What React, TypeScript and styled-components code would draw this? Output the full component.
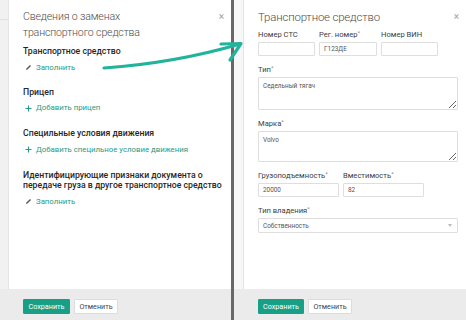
import React from "react";
import styled, { createGlobalStyle } from "styled-components";

const Global = createGlobalStyle`
  html, body { margin: 0; padding: 0; background: #fff; }
  body { font-family: Roboto, "Liberation Sans", Arial, sans-serif; }
  * { box-sizing: border-box; }
`;

const Page = styled.div`
  position: relative;
  display: flex;
  width: 466px;
  height: 320px;
  overflow: hidden;
  background: #fff;
`;

const Screen = styled.div<{ $w?: number }>`
  display: flex;
  flex-direction: column;
  ${(p) => (p.$w ? `width: ${p.$w}px;` : "flex: 1;")}
  height: 320px;
`;

const Body = styled.div`
  flex: 1;
  display: flex;
  min-height: 0;
`;

const Backdrop = styled.div<{ $w: number; $line?: boolean }>`
  width: ${(p) => p.$w}px;
  flex-shrink: 0;
  background: ${(p) => (p.$line ? "#f1f1f1" : "#f7f7f7")};
  border-right: 1px solid #e4e4e4;
  ${(p) =>
    p.$line
      ? `background-image: linear-gradient(#f1f1f1 19px, #e2e2e2 19px, #e2e2e2 20px, #f1f1f1 20px);`
      : ""}
`;

const Panel = styled.div<{ $pl: number }>`
  flex: 1;
  position: relative;
  background: #fff;
  padding: 9px 8px 0 ${(p) => p.$pl}px;
  display: flex;
  flex-direction: column;
`;

const Title = styled.h1<{ $size: number }>`
  margin: 0;
  font-weight: 300;
  font-size: ${(p) => p.$size}px;
  letter-spacing: -0.15px;
  line-height: 16px;
  color: #4d4d4d;
  padding-right: 30px;
`;

const Close = styled.span`
  position: absolute;
  top: 11px;
  right: 7px;
  font-size: 10px;
  color: #a0a0a0;
  line-height: 12px;
`;

const Section = styled.div<{ $mt: number }>`
  margin-top: ${(p) => p.$mt}px;
  display: flex;
  flex-direction: column;
  gap: 5px;
`;

const Heading = styled.div`
  font-size: 8.7px;
  font-weight: 500;
  line-height: 10.5px;
  color: #262626;
  white-space: nowrap;
`;

const Link = styled.div`
  display: flex;
  align-items: center;
  gap: 4px;
  font-size: 7.8px;
  line-height: 12px;
  color: #2a9a84;
  padding-left: 2px;
`;

const Footer = styled.div<{ $pl: number }>`
  height: 31px;
  background: #ebebeb;
  display: flex;
  gap: 4px;
  padding: 10px 0 0 ${(p) => p.$pl}px;
`;

const Button = styled.button<{ $primary?: boolean; $w: number }>`
  width: ${(p) => p.$w}px;
  height: 15px;
  padding: 0;
  font-family: inherit;
  font-size: 7.2px;
  border-radius: 1px;
  border: 1px solid ${(p) => (p.$primary ? "#17a086" : "#dcdcdc")};
  background: ${(p) => (p.$primary ? "#17a086" : "#fff")};
  color: ${(p) => (p.$primary ? "#fff" : "#444")};
`;

const Divider = styled.div`
  width: 3px;
  height: 320px;
  background: #686868;
  flex-shrink: 0;
`;

const Form = styled.div`
  display: flex;
  flex-direction: column;
  gap: 9px;
  margin-top: 5px;
`;

const Row = styled.div`
  display: flex;
  gap: 4px;
`;

const Field = styled.label<{ $w?: number }>`
  display: flex;
  flex-direction: column;
  ${(p) => (p.$w ? `width: ${p.$w}px;` : "width: 200px;")}
`;

const Label = styled.span`
  font-size: 7.6px;
  line-height: 10px;
  height: 10px;
  color: #3d3d3d;
  margin-bottom: 2px;
  white-space: nowrap;
  sup { font-size: 6px; color: #888; line-height: 0; vertical-align: 2px; }
`;

const inputStyles = `
  font-family: Roboto, "Liberation Sans", Arial, sans-serif;
  font-size: 6.4px;
  color: #555;
  border: 1px solid #dedede;
  border-radius: 1px;
  background: #fff;
  padding: 0 0 0 4px;
  outline: none;
  width: 100%;
  margin: 0;
`;

const Input = styled.input`
  ${inputStyles}
  height: 14px;
`;

const TextArea = styled.textarea<{ $h: number }>`
  ${inputStyles}
  height: ${(p) => p.$h}px;
  padding-top: 4px;
  resize: vertical;
  line-height: 9px;
  display: block;
`;

const Select = styled.div`
  ${inputStyles}
  height: 15px;
  display: flex;
  align-items: center;
  justify-content: space-between;
  padding-right: 5px;
`;

const Caret = styled.span`
  width: 0;
  height: 0;
  border-left: 2.5px solid transparent;
  border-right: 2.5px solid transparent;
  border-top: 3px solid #bdbdbd;
`;

const ArrowLayer = styled.svg`
  position: absolute;
  left: 0;
  top: 0;
  pointer-events: none;
`;

const Pencil = () => (
  <svg width="7" height="7" viewBox="0 0 7 7">
    <path d="M1 6 L1.4 4.6 L5 1 L6 2 L2.4 5.6 Z" fill="#555" />
  </svg>
);

const Plus = () => (
  <svg width="7" height="7" viewBox="0 0 7 7">
    <path d="M3.5 0.5 V6.5 M0.5 3.5 H6.5" stroke="#2a9a84" strokeWidth="1.1" />
  </svg>
);

export default function App() {
  return (
    <>
      <Global />
      <Page>
        <Screen $w={231}>
          <Body>
            <Backdrop $w={9} $line />
            <Panel $pl={14}>
              <Title $size={10.6}>Сведения о заменах транспортного средства</Title>
              <Close>×</Close>
              <Section $mt={5}>
                <Heading>Транспортное средство</Heading>
                <Link>
                  <Pencil />
                  Заполнить
                </Link>
              </Section>
              <Section $mt={13}>
                <Heading>Прицеп</Heading>
                <Link>
                  <Plus />
                  Добавить прицеп
                </Link>
              </Section>
              <Section $mt={14}>
                <Heading>Специльные условия движения</Heading>
                <Link>
                  <Plus />
                  Добавить специльное условие движения
                </Link>
              </Section>
              <Section $mt={14}>
                <Heading>
                  Идентифицирующие признаки документа о
                  <br />
                  передаче груза в другое транспортное средство
                </Heading>
                <Link>
                  <Pencil />
                  Заполнить
                </Link>
              </Section>
            </Panel>
          </Body>
          <Footer $pl={23}>
            <Button $primary $w={47}>Сохранить</Button>
            <Button $w={44}>Отменить</Button>
          </Footer>
        </Screen>
        <Divider />
        <Screen>
          <Body>
            <Backdrop $w={10} />
            <Panel $pl={14}>
              <Title $size={11.4}>Транспортное средство</Title>
              <Close>×</Close>
              <Form>
                <Row>
                  <Field $w={57}>
                    <Label>Номер СТС</Label>
                    <Input readOnly defaultValue="" />
                  </Field>
                  <Field $w={58}>
                    <Label>Рег. номер<sup>*</sup></Label>
                    <Input readOnly defaultValue="Г123ДЕ" />
                  </Field>
                  <Field $w={57}>
                    <Label>Номер ВИН</Label>
                    <Input readOnly defaultValue="" />
                  </Field>
                </Row>
                <Field>
                  <Label>Тип<sup>*</sup></Label>
                  <TextArea $h={33} readOnly defaultValue="Седельный тягач" />
                </Field>
                <Field>
                  <Label>Марка<sup>*</sup></Label>
                  <TextArea $h={31} readOnly defaultValue="Volvo" />
                </Field>
                <Row>
                  <Field $w={81}>
                    <Label>Грузоподъемность<sup>*</sup></Label>
                    <Input readOnly defaultValue="20000" />
                  </Field>
                  <Field $w={81}>
                    <Label>Вместимость<sup>*</sup></Label>
                    <Input readOnly defaultValue="82" />
                  </Field>
                </Row>
                <Field>
                  <Label>Тип владения<sup>*</sup></Label>
                  <Select>
                    Собственность
                    <Caret />
                  </Select>
                </Field>
              </Form>
            </Panel>
          </Body>
          <Footer $pl={24}>
            <Button $primary $w={46}>Сохранить</Button>
            <Button $w={44}>Отменить</Button>
          </Footer>
        </Screen>
        <ArrowLayer width="466" height="320" viewBox="0 0 466 320">
          <path
            d="M104 68 Q175 63 240 44"
            fill="none"
            stroke="#22b39d"
            strokeWidth="3.2"
            strokeLinecap="round"
          />
          <path
            d="M221 44 L241 43.5 L230 60"
            fill="none"
            stroke="#22b39d"
            strokeWidth="3.2"
            strokeLinecap="round"
            strokeLinejoin="round"
          />
        </ArrowLayer>
      </Page>
    </>
  );
}
